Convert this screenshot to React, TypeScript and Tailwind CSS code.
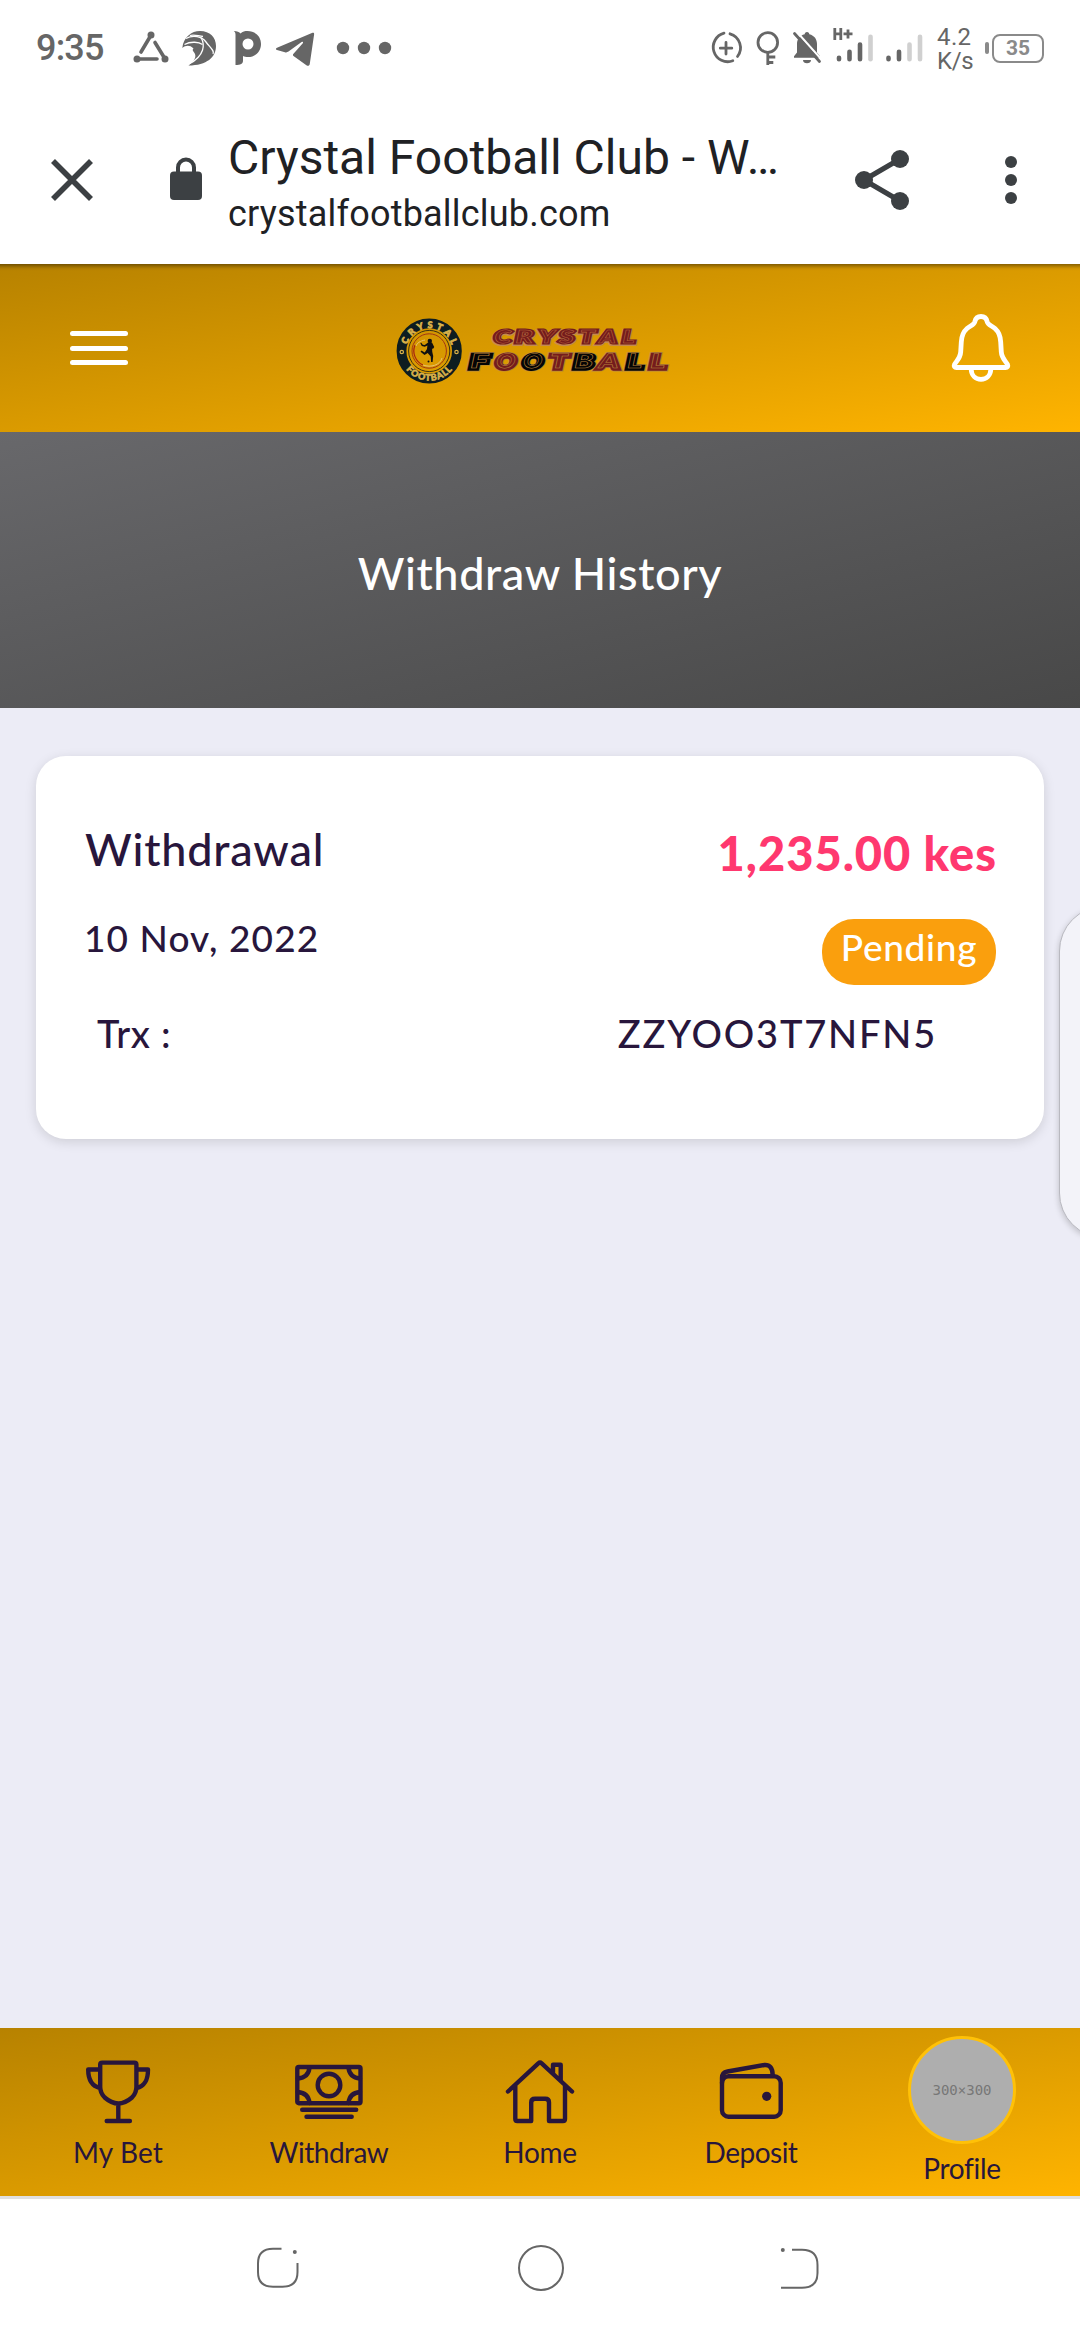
import type { ReactNode } from "react";

const gold = "bg-linear-to-br from-[#b78200] to-[#ffb400]";

function StatusBar() {
  return (
    <div className="h-[106px] shrink-0 flex items-start pt-7 pl-9 pr-9 text-[#666666]">
      <span className="font-['Roboto'] font-medium text-[36px] leading-[41px] tracking-[-0.800px] w-[72px] whitespace-nowrap">9:35</span>
      {/* triangle of nodes */}
      <svg className="ml-6 w-10 h-10" viewBox="0 0 40 40" fill="currentColor">
        <g stroke="currentColor" strokeWidth="3.600" strokeLinecap="round">
          <path d="M18.500 8L9 24M23 14.500L32.500 30M7 31H25" />
        </g>
        <circle cx="19" cy="7" r="3.500" />
        <circle cx="5" cy="31" r="3.500" />
        <circle cx="33" cy="31" r="3.500" />
      </svg>
      {/* feathered bird head */}
      <svg className="ml-2.5 w-[36px] h-10" viewBox="0 0 36 40">
        <path fill="#666666" d="M.3 20C1.500 9 9.500 3 18 3c10 0 16 6.500 16 15 0 11-9 19.500-27.500 19.500 5-4 8-7.500 6.500-11.500-1.200-3-3.500-3.500-1.500-5.500-4-4-8-3-11.200-.5z" />
        <g fill="none" stroke="#fff" strokeWidth="1.300">
          <path d="M4 10.500C11 6.500 20 8.500 24 14s9 9 7 12" />
          <path d="M2.500 16.500C9 13 17 14 20.500 16.500" />
          <path d="M19 9.500c4 7 4 18-12 26.500" />
          <path d="M8 7.500c4-1.500 8 .5 13 1" />
        </g>
      </svg>
      {/* letterform badge */}
      <svg className="ml-[15px] w-[30px] h-10" viewBox="0 0 30 40" fill="none">
        <path fill="#666666" d="M.8 3C4 3 6.500 4 7.500 5.500 9.500 3.500 12 3 14.500 3 22.500 3 28 8.500 28 16s-5.500 13-13 13c-2 0-3.500-.4-5-1v4.500c0 3.500-2.500 4.500-7.500 4.500V6.500C2.500 5 2 4 .8 3z" />
        <circle cx="15" cy="16" r="5.500" fill="#fff" />
      </svg>
      {/* paper plane */}
      <svg className="ml-[13px] w-10 h-10" viewBox="0 0 40 40" fill="currentColor">
        <path d="M36.500 4.800c1.200-.4 1.800.3 1.600 1.600l-4.300 29.300c-.3 2-1.800 2.600-3.400 1.500L17.500 28c-.8-.7-.8-1.500 0-2.300L26.800 15.200c.8-1-.1-1.900-1.200-1.100L12.500 23.600c-1.200.8-2.300 1-3.600.6L1 22c-1.400-.5-1.500-1.600 0-2.300z" />
      </svg>
      <svg className="ml-5 w-14 h-10" viewBox="0 0 56 40" fill="currentColor">
        <circle cx="7" cy="20" r="6.200" />
        <circle cx="28" cy="20" r="6.200" />
        <circle cx="49" cy="20" r="6.200" />
      </svg>
      <div className="flex-1" />
      {/* data saver */}
      <svg className="w-9 h-10" viewBox="0 0 36 40" fill="none" stroke="currentColor" strokeWidth="2.800" strokeLinecap="round">
        <path d="M16 5.200A14.500 14.500 0 1 0 24.800 32.800M22 5.800A14.500 14.500 0 0 1 29.500 28.500M18 14.500v11.500M12.300 20.200h11.500" />
      </svg>
      {/* key */}
      <svg className="ml-2.5 w-7 h-10" viewBox="0 0 28 40" fill="none" stroke="currentColor" strokeWidth="2.800">
        <circle cx="13.800" cy="14.500" r="9.800" />
        <path d="M13.800 24.500V37M13.800 29h7.500M13.800 34.500h5.500" />
      </svg>
      {/* muted bell */}
      <svg className="ml-2.5 w-[30px] h-10" viewBox="0 0 30 40">
        <path fill="#666666" d="M15 4c1.500 0 2.300 1 2.300 2.300C22.500 7.500 25 11.500 25 16v8.500l3 3.800v1.500H2v-1.500l3-3.800V16c0-4.500 2.500-8.500 7.700-9.700C12.700 5 13.500 4 15 4zM11 32h8c0 2.200-1.800 3.300-4 3.300S11 34.200 11 32z" />
        <path d="M4.500 3.500L30 32" stroke="#fff" strokeWidth="2" />
        <path d="M2.500 5.500L27.500 33.500" stroke="#666666" strokeWidth="2.800" strokeLinecap="round" />
      </svg>
      {/* mobile signal, slot one */}
      <svg className="ml-2.5 w-[42px] h-10" viewBox="0 0 42 40" fill="none" strokeLinecap="round" strokeWidth="4.600" stroke="#666666">
        <g strokeWidth="2.800" strokeLinecap="butt">
          <path d="M2.800 -1V12M8.800 -1V12M2.800 5.800h6M11.500 5.800h9M16 1.500v9" />
        </g>
        <path d="M7 29.800v1.500M17.500 23.800v7.500M28 16.500v14.800" />
        <path d="M38.500 8.800v22.500" stroke="#d0d0d0" />
      </svg>
      {/* mobile signal, slot two */}
      <svg className="ml-2.5 w-10 h-10" viewBox="0 0 40 40" fill="none" strokeLinecap="round" strokeWidth="4.600" stroke="#666666">
        <path d="M4.500 29.800v1.500M15 23.800v7.500" />
        <path d="M25.500 16.500v14.800M36 8.800v22.500" stroke="#d0d0d0" />
      </svg>
      <div className="ml-[13px] -mt-[3px] w-10 flex flex-col font-['Roboto'] text-[24px] leading-6">
        <span className="tracking-[0.400px]">4.2</span>
        <span className="tracking-[-0.400px]">K/s</span>
      </div>
      {/* battery */}
      <div className="ml-2 h-10 flex items-center">
        <div className="w-1 h-3 rounded-full bg-[#8a8a8a]" />
        <div className="ml-[3px] w-[52px] h-[29px] rounded-[8px] border-[2.500px] border-solid border-[#8a8a8a] flex items-center justify-center font-['Roboto'] font-bold text-[21px] leading-6 text-[#8a8a8a]">
          35
        </div>
      </div>
    </div>
  );
}

function BrowserBar() {
  return (
    <div className="h-[158px] shrink-0 flex items-start pl-[50px] text-[#3c4043]">
      <svg className="mt-[52px] w-11 h-11" viewBox="0 0 44 44" fill="none" stroke="currentColor" strokeWidth="5.600">
        <path d="M3 3L41 41M41 3L3 41" />
      </svg>
      <svg className="ml-[76px] mt-[51px] w-8 h-[43px]" viewBox="0 0 32 43">
        <rect x="0" y="14.500" width="32" height="28.500" rx="4" fill="currentColor" />
        <path d="M8 16V10.500a8 8 0 0 1 16 0V16" fill="none" stroke="currentColor" strokeWidth="4" />
      </svg>
      <div className="ml-[26px] mt-[22px] w-[560px] flex flex-col font-['Roboto'] text-[#202124] whitespace-nowrap">
        <span className="text-[48px] leading-[60px]">Crystal Football Club - W…</span>
        <span className="mt-1 text-[36px] leading-[44px] tracking-[0.200px]">crystalfootballclub.com</span>
      </div>
      <svg className="ml-[66px] mt-[42px] w-14 h-16" viewBox="0 0 56 64" fill="currentColor">
        <path d="M10 32L46 11M10 32L46 53" stroke="currentColor" strokeWidth="5.200" />
        <circle cx="10" cy="32" r="9" />
        <circle cx="46" cy="11" r="9" />
        <circle cx="46" cy="53" r="9" />
      </svg>
      <svg className="ml-[94px] mt-[50px] w-3.5 h-12" viewBox="0 0 14 48" fill="currentColor">
        <circle cx="7" cy="6" r="6" />
        <circle cx="7" cy="24" r="6" />
        <circle cx="7" cy="42" r="6" />
      </svg>
    </div>
  );
}

const topLetters: [string, number, number][] = [
  ["C", 96, 19],
  ["R", 117, 20],
  ["Y", 141, 18],
  ["S", 161, 17],
  ["T", 181, 18],
  ["A", 201, 19],
  ["L", 224, 15],
];
const bottomLetters: [string, number, number, string][] = [
  ["F", 71, 20, "#050505"],
  ["O", 97, 21, "#741c1c"],
  ["O", 124, 21, "#050505"],
  ["T", 151, 19, "#741c1c"],
  ["B", 175, 21, "#050505"],
  ["A", 200, 21, "#741c1c"],
  ["L", 228, 17, "#050505"],
  ["L", 251, 17, "#741c1c"],
];

function Logo() {
  return (
    <svg className="w-[290px] h-[68px] overflow-visible" viewBox="0 0 290 68" fontFamily="Lato" fontWeight="900">
      <defs>
        <path id="arc-top" d="M10.900 37.500A23.300 23.300 0 0 1 57.500 37.500" />
        <path id="arc-bottom" d="M4.500 37A29.700 29.700 0 0 0 63.900 37" />
      </defs>
      <circle cx="34.200" cy="37" r="27.700" fill="none" stroke="#0e1d20" strokeWidth="9.800" />
      <circle cx="34.200" cy="37" r="20.600" fill="none" stroke="#3a3210" strokeWidth="1" />
      <circle cx="34.200" cy="37" r="17.200" fill="none" stroke="#a03414" strokeWidth="1" />
      <path d="M20 31a15.500 15.500 0 0 0 8 20" fill="none" stroke="#a8200f" strokeWidth="1.200" />
      <path d="M30 26c-5 1-8 3-9 6M28 51c8 3 17 0 19-7" fill="none" stroke="#e8c070" strokeWidth="1" />
      <text fontSize="9" fill="#d9b24a" stroke="#d9b24a" strokeWidth=".8">
        <textPath href="#arc-top" startOffset="7" textLength="59" lengthAdjust="spacing">CRYSTAL</textPath>
      </text>
      <text fontSize="9" fill="#d9b24a" stroke="#d9b24a" strokeWidth=".6">
        <textPath href="#arc-bottom" startOffset="20" textLength="53">FOOTBALL</textPath>
      </text>
      <circle cx="6.800" cy="38" r="1.700" fill="none" stroke="#d9b24a" strokeWidth="1.200" />
      <circle cx="61.500" cy="38" r="1.700" fill="none" stroke="#d9b24a" strokeWidth="1.200" />
      <circle cx="34.800" cy="27" r="2.200" fill="#101010" />
      <path fill="#101010" d="M33 28.500l4 0 2.200 4.500-1.400 2.200-.8-1.200.3 4 .9 4-.6 6h-1.500l-.4-5.500-3-3.500-3.200 2-4-3.200 1-1.300 3.200 2 2.300-3.400.4-3.600-2.600 1.200-3-.8-1.500-2.800 1-.3 1.500 2 2 .2z" />
      <circle cx="33.500" cy="47.500" r="1" fill="#101010" />
      <g fontSize="18" transform="translate(0 29.500)">
        {topLetters.map(([ch, x, w]) => (
          <g key={x} transform={`translate(${x} 0) skewX(-12)`}>
            <text x="1.500" y="0" textLength={w - 1} lengthAdjust="spacingAndGlyphs" stroke="#c58a4e" strokeWidth="4" fill="#c58a4e">{ch}</text>
            <text x="1.500" y="-.3" textLength={w - 1} lengthAdjust="spacingAndGlyphs" stroke="#741c1c" strokeWidth="2.800" fill="#741c1c">{ch}</text>
            <text x="2.500" y="-.3" textLength={w - 3} lengthAdjust="spacingAndGlyphs" stroke="#b5643a" strokeWidth=".5" fill="none">{ch}</text>
          </g>
        ))}
      </g>
      <g fontSize="20" transform="translate(0 54.800)">
        {bottomLetters.map(([ch, x, w, color]) => (
          <g key={x} transform={`translate(${x} 0) skewX(-12)`}>
            <text x="2" y=".4" textLength={w} lengthAdjust="spacingAndGlyphs" stroke="#b98a3c" strokeWidth="4.800" fill="#b98a3c">{ch}</text>
            <text x="2" y="0" textLength={w} lengthAdjust="spacingAndGlyphs" stroke={color} strokeWidth="3.600" fill={color}>{ch}</text>
            <text x="3" y="-.4" textLength={w - 2} lengthAdjust="spacingAndGlyphs" stroke="#b5803a" strokeWidth=".5" fill="none">{ch}</text>
          </g>
        ))}
      </g>
    </svg>
  );
}

function Header() {
  return (
    <div className={`h-[168px] shrink-0 flex items-center justify-between pl-[70px] pr-[69px] shadow-[inset_0_7px_4px_-5px_rgba(0,0,0,0.450)] ${gold}`}>
      <div className="w-[58px] flex flex-col gap-[9.500px]">
        <div className="h-[5px] rounded-full bg-white" />
        <div className="h-[5px] rounded-full bg-white" />
        <div className="h-[5px] rounded-full bg-white" />
      </div>
      <Logo />
      <svg className="w-[60px] h-[70px]" viewBox="0 0 60 70" fill="none" stroke="#fff" strokeWidth="4.800" strokeLinejoin="round">
        <path d="M30 3.500C26.500 3.500 24.500 5.500 23.800 8.700 23 12 19.500 12.500 16 15.500 11.500 19.500 10.500 24 10.300 29L9.700 39C9.300 45 5.500 48 3.500 51.500 2.700 53.200 3.500 54.500 5.500 54.500H54.500C56.500 54.500 57.300 53.200 56.500 51.500 54.500 48 50.700 45 50.300 39L49.700 29C49.500 24 48.500 19.500 44 15.500 40.500 12.500 37 12 36.200 8.700 35.500 5.500 33.500 3.500 30 3.500z" />
        <path d="M20.200 56.500C20.500 62.500 24.500 66.300 30 66.300S39.500 62.500 39.800 56.500" />
      </svg>
    </div>
  );
}

function WithdrawalCard() {
  return (
    <div className="mx-9 mt-12 h-[383px] shrink-0 rounded-[30px] bg-white pt-[63px] pr-12 pl-[49px] font-['Lato'] font-medium text-[#28163c] shadow-[0_3px_12px_rgba(0,0,0,0.130)] whitespace-nowrap">
      <div className="h-16 flex items-start justify-between">
        <span className="text-[45px] leading-[60px] tracking-[0.800px]">Withdrawal</span>
        <span className="mt-1 -mr-px text-[47px] leading-[60px] tracking-[1px] font-black text-[#ff386f]">1,235.00 kes</span>
      </div>
      <div className="mt-[30px] h-[72px] flex items-start justify-between">
        <span className="mt-px -ml-px text-[37px] leading-[48px] tracking-[1.100px]">10 Nov, 2022</span>
        <span className="mt-1.5 w-[174px] h-[66px] rounded-[32px] bg-[#fa9f0d] text-center text-white text-[37px] leading-[56px] tracking-[0.700px]">
          Pending
        </span>
      </div>
      <div className="mt-6 flex justify-between pl-3 pr-[59px] text-[38px] leading-[48px]">
        <span className="tracking-[0.700px]">Trx :</span>
        <span className="tracking-[1.800px]">ZZYOO3T7NFN5</span>
      </div>
    </div>
  );
}

function Tab({ label, className, children }: { label: string; className: string; children: ReactNode }) {
  return (
    <div className="w-[211px] h-full pt-[26px] flex flex-col items-center">
      <svg className="w-[72px] h-[72px]" viewBox="0 0 72 72" fill="none" stroke="currentColor" strokeWidth="4.400" strokeLinecap="round" strokeLinejoin="round">
        {children}
      </svg>
      <span className={`mt-2 text-[28px] leading-[37px] ${className}`}>{label}</span>
    </div>
  );
}

function BottomTabs() {
  return (
    <div className={`h-[168px] shrink-0 flex justify-center font-['Lato'] text-[#28163c] whitespace-nowrap ${gold}`}>
      <Tab label="My Bet" className="tracking-[0.100px]">
        <path d="M20.200 8.600H52.400Q54.400 8.600 54.400 10.600V33Q54.400 39 50 43.500 43 49.500 36.300 49.500T22.700 43.500Q18.200 39 18.200 33V10.600Q18.200 8.600 20.200 8.600zM36.300 50V67M24.700 67H47.900M18 15.500H6.200C6.200 26 9.500 32 18 34M54.600 15.500H66C66 26 63 32 54.600 34" />
      </Tab>
      <Tab label="Withdraw" className="tracking-[-0.500px]">
        <rect x="4.300" y="13" width="63.200" height="36.200" rx="1.500" />
        <circle cx="36" cy="31" r="11.300" />
        <path d="M16.500 13.500Q15.500 23.500 4.800 24.500M55.500 13.500Q56.500 23.500 67 24.500M16.500 49Q15.500 39 4.800 38M55.500 49Q56.500 39 67 38M9.200 55.800H63.200M13.500 62.700H58.700" />
      </Tab>
      <Tab label="Home" className="tracking-[-0.300px]">
        <path d="M4 37.500L34.300 9.300Q36 7.800 37.700 9.300L68 37.500M11.300 31.500V65Q11.300 67 13.300 67H27.200V48.500Q27.200 44.800 31 44.800H41.200Q45 44.800 45 48.500V67H59Q61 67 61 65V31.500M49 19V10.800H56.700V26.500" />
      </Tab>
      <Tab label="Deposit" className="tracking-[-0.500px]">
        <rect x="7" y="22.200" width="58.700" height="40.500" rx="6.500" />
        <path d="M7 29V24Q7 18.500 12.500 17.500L49.500 11Q57.500 10.500 57.700 21" />
        <circle cx="51.700" cy="42.300" r="4.600" fill="currentColor" stroke="none" />
      </Tab>
      <div className="w-[211px] h-full pt-2 flex flex-col items-center">
        <div className="w-[108px] h-[108px] rounded-full border-[3px] border-[#ffc107] bg-[#aeaeae] flex items-center justify-center font-['DejaVu_Sans_Mono'] text-[14px] text-[#777777]">
          300×300
        </div>
        <span className="mt-[6px] text-[28px] leading-[37px] tracking-[-0.300px]">Profile</span>
      </div>
    </div>
  );
}

function SystemNav() {
  return (
    <div className="h-[144px] shrink-0 border-t-[3px] border-[#e0e0e0] bg-white flex items-start justify-between pl-[256px] pr-[260px] pt-[46px] text-[#666666]">
      <svg className="w-11 h-12" viewBox="0 0 44 48" fill="none" stroke="currentColor" strokeWidth="2">
        <path d="M25.500 3.800H17Q2 3.800 2 18.500V27Q2 41.800 17 41.800H26.500Q41.500 41.800 41.500 27V18" />
        <circle cx="38.800" cy="7" r="2" fill="currentColor" stroke="none" />
      </svg>
      <svg className="w-12 h-12 -mr-px" viewBox="0 0 48 48" fill="none" stroke="currentColor" strokeWidth="2">
        <circle cx="24" cy="23" r="22" />
      </svg>
      <svg className="w-10 h-12" viewBox="0 0 40 48" fill="none" stroke="currentColor" strokeWidth="2">
        <path d="M12 4.800H22Q37.500 4.800 37.500 20V28Q37.500 42.800 22 42.800H1" />
        <circle cx="2.800" cy="5" r="2" fill="currentColor" stroke="none" />
      </svg>
    </div>
  );
}

export default function App() {
  return (
    <div className="relative w-[1080px] h-[2340px] overflow-hidden flex flex-col bg-white">
      <StatusBar />
      <BrowserBar />
      <Header />
      <div className="h-[276px] shrink-0 bg-linear-to-br from-[#68686b] to-[#484848] text-center font-['Lato'] font-medium text-[45px] tracking-[0.600px] text-white leading-[283px]">
        Withdraw History
      </div>
      <div className="flex-1 bg-[#ececf6] flex flex-col">
        <WithdrawalCard />
      </div>
      <BottomTabs />
      <SystemNav />
      {/* edge panel handle, floating over the page */}
      <div className="absolute top-[906px] left-[1059px] w-[90px] h-[332px] rounded-[46px] border border-[#b9b9c0] bg-[#f3f3f9] shadow-[0_2px_6px_rgba(0,0,0,0.200)]" />
    </div>
  );
}
